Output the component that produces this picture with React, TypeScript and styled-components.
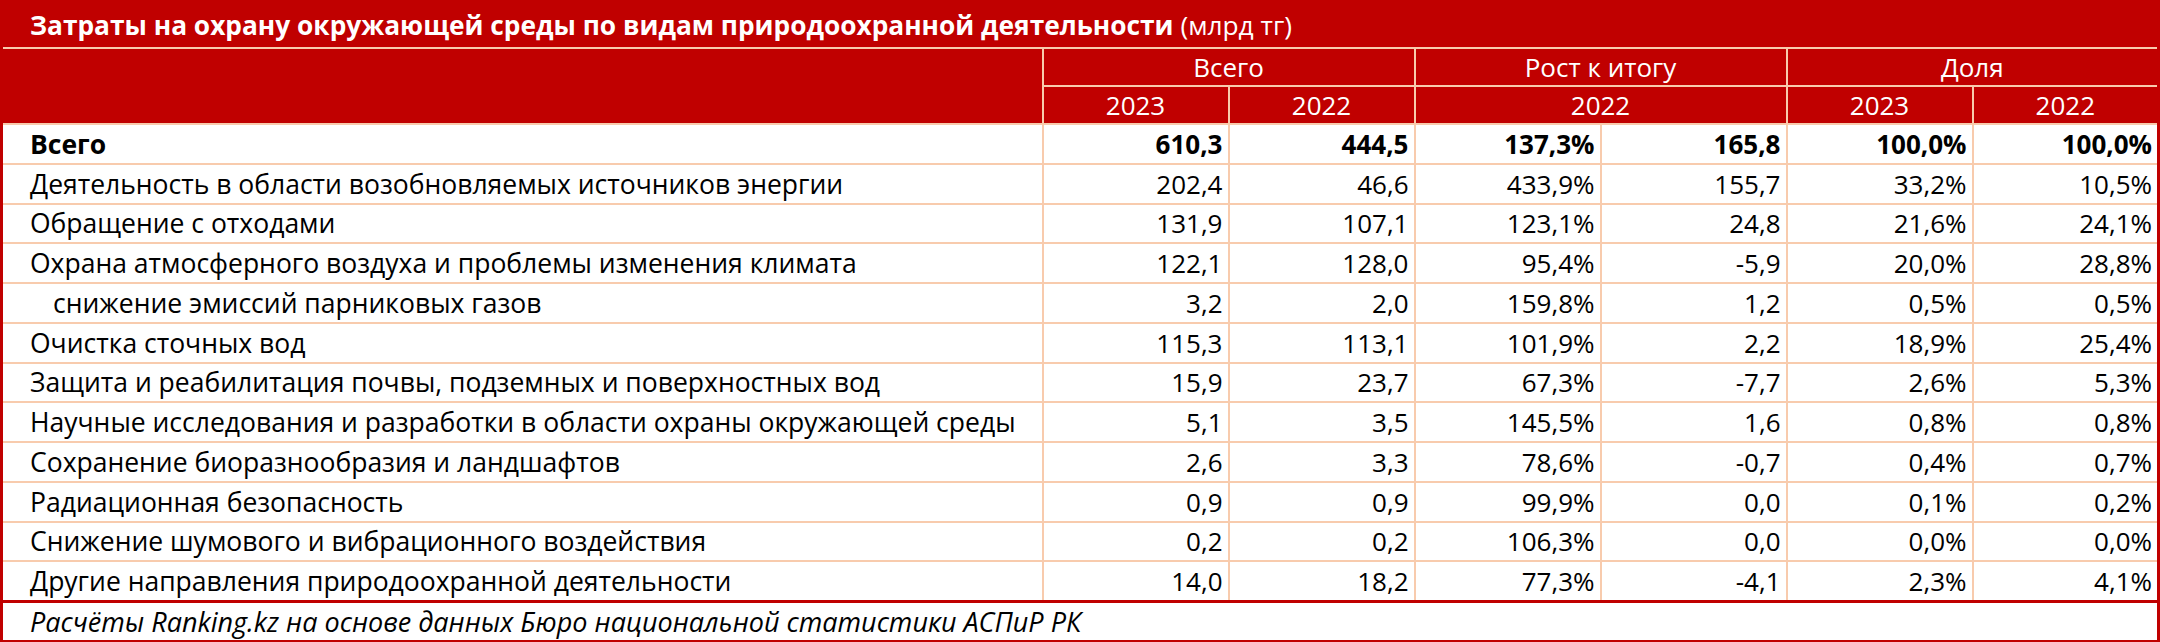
import React from 'react';
import styled, { createGlobalStyle } from 'styled-components';

const RED = '#C00000';
const LINE = '#F8CBAD';

const Global = createGlobalStyle`
  html, body { margin: 0; padding: 0; background: #ffffff; }
  body { font-family: 'Open Sans', 'Noto Sans', sans-serif; }
`;

const Table = styled.table`
  width: 2160px;
  table-layout: fixed;
  border-collapse: collapse;
  border: 3px solid ${RED};
  font-family: 'Open Sans', 'Noto Sans', sans-serif;
  font-size: 26px;
  color: #000000;
`;

const LabelCol = styled.col`
  width: 1041px;
`;

const NumCol = styled.col`
  width: 186px;
`;

const TitleCell = styled.th`
  height: 44px;
  padding: 0 0 0 27px;
  background: ${RED};
  color: #ffffff;
  text-align: left;
  vertical-align: middle;
  font-weight: 700;
  font-size: 26.3px;
  border-bottom: 2px solid ${LINE};
  white-space: nowrap;
`;

const Unit = styled.span`
  font-weight: 400;
`;

const HeadRow = styled.tr`
  height: 38px;
`;

const HeadCell = styled.th<{ $lineRight?: boolean; $lineBottom?: boolean }>`
  padding: 0;
  background: ${RED};
  color: #ffffff;
  font-weight: 400;
  text-align: center;
  vertical-align: middle;
  border-right: ${(p) => (p.$lineRight ? `2px solid ${LINE}` : 'none')};
  border-bottom: ${(p) => (p.$lineBottom ? `2px solid ${LINE}` : 'none')};
`;

const BodyRow = styled.tr`
  height: 39.75px;
`;

const LabelCell = styled.td<{ $bold?: boolean; $indent?: boolean }>`
  padding: 0 0 0 ${(p) => (p.$indent ? 50 : 27)}px;
  text-align: left;
  vertical-align: middle;
  white-space: nowrap;
  font-size: 26.5px;
  font-weight: ${(p) => (p.$bold ? 700 : 400)};
  border: 2px solid ${LINE};
`;

const NumCell = styled.td<{ $bold?: boolean }>`
  padding: 0 5px 0 0;
  text-align: right;
  vertical-align: middle;
  white-space: nowrap;
  font-weight: ${(p) => (p.$bold ? 700 : 400)};
  border: 2px solid ${LINE};
`;

const FootCell = styled.td`
  height: 37px;
  padding: 0 0 0 27px;
  text-align: left;
  vertical-align: middle;
  font-style: italic;
  font-size: 27px;
  border-top: 3px solid ${RED};
  white-space: nowrap;
`;

type Row = { label: string; values: string[]; bold?: boolean; indent?: boolean };

const rows: Row[] = [
  { label: 'Всего', values: ['610,3', '444,5', '137,3%', '165,8', '100,0%', '100,0%'], bold: true },
  { label: 'Деятельность в области возобновляемых источников энергии', values: ['202,4', '46,6', '433,9%', '155,7', '33,2%', '10,5%'] },
  { label: 'Обращение с отходами', values: ['131,9', '107,1', '123,1%', '24,8', '21,6%', '24,1%'] },
  { label: 'Охрана атмосферного воздуха и проблемы изменения климата', values: ['122,1', '128,0', '95,4%', '-5,9', '20,0%', '28,8%'] },
  { label: 'снижение эмиссий парниковых газов', values: ['3,2', '2,0', '159,8%', '1,2', '0,5%', '0,5%'], indent: true },
  { label: 'Очистка сточных вод', values: ['115,3', '113,1', '101,9%', '2,2', '18,9%', '25,4%'] },
  { label: 'Защита и реабилитация почвы, подземных и поверхностных вод', values: ['15,9', '23,7', '67,3%', '-7,7', '2,6%', '5,3%'] },
  { label: 'Научные исследования и разработки в области охраны окружающей среды', values: ['5,1', '3,5', '145,5%', '1,6', '0,8%', '0,8%'] },
  { label: 'Сохранение биоразнообразия и ландшафтов', values: ['2,6', '3,3', '78,6%', '-0,7', '0,4%', '0,7%'] },
  { label: 'Радиационная безопасность', values: ['0,9', '0,9', '99,9%', '0,0', '0,1%', '0,2%'] },
  { label: 'Снижение шумового и вибрационного воздействия', values: ['0,2', '0,2', '106,3%', '0,0', '0,0%', '0,0%'] },
  { label: 'Другие направления природоохранной деятельности', values: ['14,0', '18,2', '77,3%', '-4,1', '2,3%', '4,1%'] },
];

export default function App() {
  return (
    <>
      <Global />
      <Table>
        <colgroup>
          <LabelCol />
          <NumCol />
          <NumCol />
          <NumCol />
          <NumCol />
          <NumCol />
          <NumCol />
        </colgroup>
        <thead>
          <tr>
            <TitleCell colSpan={7}>
              Затраты на охрану окружающей среды по видам природоохранной деятельности <Unit>(млрд тг)</Unit>
            </TitleCell>
          </tr>
          <HeadRow>
            <HeadCell rowSpan={2} $lineRight />
            <HeadCell colSpan={2} $lineRight $lineBottom>Всего</HeadCell>
            <HeadCell colSpan={2} $lineRight $lineBottom>Рост к итогу</HeadCell>
            <HeadCell colSpan={2} $lineBottom>Доля</HeadCell>
          </HeadRow>
          <HeadRow>
            <HeadCell $lineRight>2023</HeadCell>
            <HeadCell $lineRight>2022</HeadCell>
            <HeadCell colSpan={2} $lineRight>2022</HeadCell>
            <HeadCell $lineRight>2023</HeadCell>
            <HeadCell>2022</HeadCell>
          </HeadRow>
        </thead>
        <tbody>
          {rows.map((r) => (
            <BodyRow key={r.label}>
              <LabelCell $bold={r.bold} $indent={r.indent}>{r.label}</LabelCell>
              {r.values.map((v, i) => (
                <NumCell key={i} $bold={r.bold}>{v}</NumCell>
              ))}
            </BodyRow>
          ))}
        </tbody>
        <tfoot>
          <tr>
            <FootCell colSpan={7}>
              Расчёты Ranking.kz на основе данных Бюро национальной статистики АСПиР РК
            </FootCell>
          </tr>
        </tfoot>
      </Table>
    </>
  );
}
